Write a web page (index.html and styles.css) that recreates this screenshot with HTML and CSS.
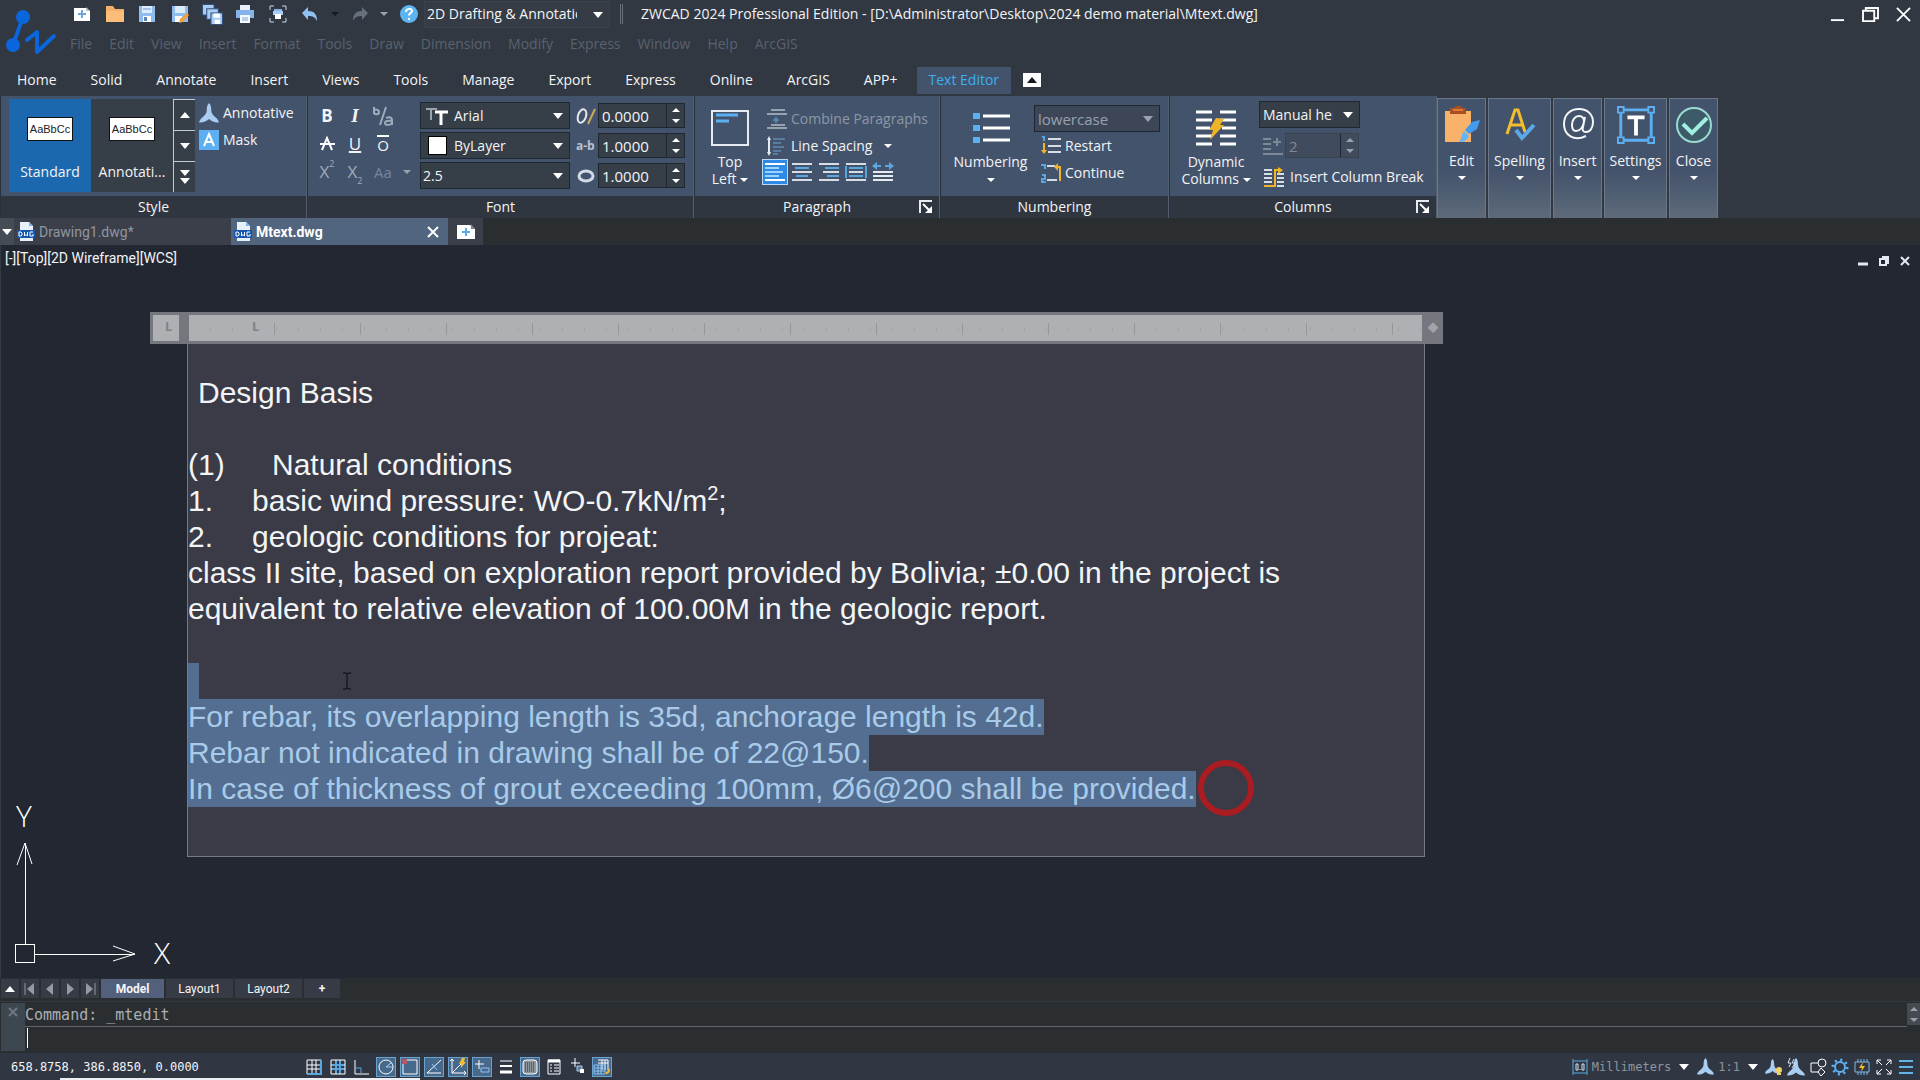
FILE: index.html
```
<!DOCTYPE html>
<html lang="en">
<head>
    <meta charset="UTF-8">
    <meta name="viewport" content="width=device-width, initial-scale=1.0">
    <title>ZWCAD 2024 Professional Edition</title>
    <link rel="stylesheet" href="styles.css">
</head>
<body>

    <!-- Shared icons -->
    <svg class="sprite" aria-hidden="true">
        <symbol id="i-scale" viewBox="0 0 18 18">
            <path d="M9 0c1.6 1.6 2 3.400 2 6.500 0 2.600 1.500 4.500 4 6.500 1.500 1.200 2.500 2.500 3 4.500-3.500.3-6.500-.6-9-3-2.500 2.400-5.500 3.300-9 3 .5-2 1.500-3.300 3-4.500 2.500-2 4-3.900 4-6.500C7 3.400 7.400 1.600 9 0z" fill="#a9cdf0"/>
        </symbol>
        <symbol id="i-dwg" viewBox="0 0 18 20">
            <path d="M3 0h9l4 4v15H3z" fill="#e8f0fa"/>
            <path d="M12 0v4h4z" fill="#7fb2ea"/>
            <rect y="8" width="18" height="8" fill="#1558b0"/>
            <path d="M2 10v4h2l1-1v-2l-1-1zM7.500 10v4l1.500-1.500 1.500 1.500v-4M16 10h-3v4h3v-2" fill="none" stroke="#fff"/>
        </symbol>
        <symbol id="i-launch" viewBox="0 0 14 14">
            <path d="M1 13V1h12" fill="none" stroke="#e8ebef" stroke-width="2"/>
            <path d="M4 4l7 7" stroke="#fff" stroke-width="2"/>
            <path d="M13 6v7H6z" fill="#fff"/>
        </symbol>
    </svg>

    <header class="top">
        <svg class="logo" viewBox="0 0 60 60" width="60" height="60" aria-hidden="true">
            <g fill="none" stroke="#0b66dd" stroke-width="4" stroke-linecap="round" stroke-linejoin="round">
                <path d="M23 13L13 41"/>
                <path d="M27 36l10-8v20l17-16"/>
            </g>
            <circle cx="23" cy="13" r="7" fill="#0b66dd"/>
            <circle cx="13" cy="41" r="7" fill="#0b66dd"/>
        </svg>
        <div class="top-rows">
            <div class="title-row">
                <div class="quick">
                    <button aria-label="New"><svg viewBox="0 0 18 18"><path d="M1 3h12l4 3v10H1z" fill="#fff"/><path d="M9 5v8M5 9h8" stroke="#6aa7df" stroke-width="2"/><path d="M13 2v4h4" fill="#b9c4d0"/></svg></button>
                    <button aria-label="Open"><svg viewBox="0 0 18 18"><path d="M0 1h7l2 3h9v13H0z" fill="#f3b06a"/><path d="M0 6h18v11H0z" fill="#fbbd78"/></svg></button>
                    <button aria-label="Save"><svg viewBox="0 0 18 18"><path d="M1 1h16v16H1z" fill="#8fbdf0"/><path d="M4 1h10v7H4z" fill="#dcecfb"/><path d="M5 11h8v6H5z" fill="#fff"/><path d="M6 12h3v4H6z" fill="#5a86b8"/><path d="M5 4h8" stroke="#6d9bd0"/></svg></button>
                    <button aria-label="Save as"><svg viewBox="0 0 18 18"><path d="M1 1h16v16H1z" fill="#8fbdf0"/><path d="M4 1h10v7H4z" fill="#dcecfb"/><path d="M4 11h7v6H4z" fill="#fff"/><path d="M16 8l2 2-6 7-4 1 1-4z" fill="#f0a040"/></svg></button>
                    <button aria-label="Save all"><svg class="larger" viewBox="0 0 20 20"><g stroke="#34507a" fill="#a9cdf5"><path d="M0.500 0.500h11v10h-11z"/><path d="M4.500 4.500h11v10h-11z"/><path d="M8.500 8.500h11v11h-11z"/></g><path d="M11 9h6v4h-6zM12 15h5v4h-5z" fill="#fff"/></svg></button>
                    <button aria-label="Plot"><svg viewBox="0 0 18 18"><path d="M4 0h10v5H4z" fill="#e8f2fd"/><path d="M0 5h18v8H0z" fill="#86b4ea"/><path d="M4 10h10v8H4z" fill="#f4f9ff"/><path d="M6 13h6M6 15h6" stroke="#7ea7d8"/></svg></button>
                    <button aria-label="Plot preview"><svg viewBox="0 0 18 18"><path d="M1 5V1h4M13 1h4v4M17 13v4h-4M5 17H1v-4" fill="none" stroke="#c8d6e6"/><path d="M5 4h8v3H5z" fill="#86b4ea"/><path d="M4 6h10v4H4z" fill="#a9cdf5"/><path d="M6 9h6v5H6z" fill="#fff"/></svg></button>
                    <button aria-label="Undo"><svg viewBox="0 0 18 18"><path d="M7 2v4c6 0 9 3 9 10-2-4-4-5-9-5v4L1 8z" fill="#8fc1f2"/></svg></button>
                    <button aria-label="Undo list"><i class="caret small dark"></i></button>
                    <button aria-label="Redo"><svg viewBox="0 0 18 18"><path d="M11 2v4c-6 0-9 3-9 10 2-4 4-5 9-5v4l6-7z" fill="#66717d"/></svg></button>
                    <button aria-label="Redo list"><i class="caret small grey"></i></button>
                    <button aria-label="Help"><svg viewBox="0 0 18 18"><circle cx="9" cy="9" r="9" fill="#5db4f3"/><path d="M6 7c0-4 6-4 6-1 0 2-3 2-3 4.500" fill="none" stroke="#fff" stroke-width="2"/><circle cx="9" cy="14" r="1.200" fill="#fff"/></svg></button>
                </div>
                <label class="combo workspace">
                    <select aria-label="Workspace"><option>2D Drafting &amp; Annotation</option></select>
                </label>
                <span class="bar"></span>
                <h1>ZWCAD 2024 Professional Edition - [D:\Administrator\Desktop\2024 demo material\Mtext.dwg]</h1>
                <div class="window-buttons">
                    <button aria-label="Minimize"><svg viewBox="0 0 16 16"><path d="M1 14h14" stroke="#fff" stroke-width="2"/></svg></button>
                    <button aria-label="Restore"><svg viewBox="0 0 18 16"><path d="M1 4h12v11H1zM4 4V1h13v11h-4" fill="none" stroke="#fff" stroke-width="2"/></svg></button>
                    <button aria-label="Close window"><svg viewBox="0 0 16 16"><path d="M1 1l14 14M15 1L1 15" stroke="#fff" stroke-width="2"/></svg></button>
                </div>
            </div>
            <nav class="menu">
                <a href="#">File</a><a href="#">Edit</a><a href="#">View</a><a href="#">Insert</a><a href="#">Format</a><a href="#">Tools</a><a href="#">Draw</a><a href="#">Dimension</a><a href="#">Modify</a><a href="#">Express</a><a href="#">Window</a><a href="#">Help</a><a href="#">ArcGIS</a>
            </nav>
        </div>
    </header>

    <nav class="ribbon-tabs">
        <button>Home</button><button>Solid</button><button>Annotate</button><button>Insert</button><button>Views</button><button>Tools</button><button>Manage</button><button>Export</button><button>Express</button><button>Online</button><button>ArcGIS</button><button>APP+</button><button class="active">Text Editor</button>
        <button class="collapse" aria-label="Collapse ribbon"><i class="caret up dark"></i></button>
    </nav>

    <div class="ribbon">
        <!-- Style -->
        <section class="panel style">
            <div class="panel-body">
                <div class="gallery">
                    <button class="card active"><span class="sample">AaBbCc</span>Standard</button>
                    <button class="card"><span class="sample">AaBbCc</span>Annotati...</button>
                    <div class="scroller">
                        <button aria-label="Previous styles"><i class="caret up"></i></button>
                        <button aria-label="Next styles"><i class="caret"></i></button>
                        <button aria-label="All styles"><i class="caret"></i><i class="caret"></i></button>
                    </div>
                </div>
                <div class="stack style-tools">
                    <button class="tool"><svg width="20" height="20"><use href="#i-scale"/></svg>Annotative</button>
                    <button class="tool"><svg width="20" height="20" viewBox="0 0 20 20"><path d="M0 0h20v20H0z" fill="#5cb0f2"/><path d="M5 16l5-12 5 12M7 12h6" fill="none" stroke="#fff" stroke-width="2"/></svg>Mask</button>
                </div>
            </div>
            <h2>Style</h2>
        </section>

        <!-- Font -->
        <section class="panel font">
            <div class="panel-body">
                <div class="format-grid">
                    <button class="bold">B</button>
                    <button class="italic">I</button>
                    <button class="soft" aria-label="Stack"><svg viewBox="0 0 22 20"><path d="M2 1v7M2 5c0-2 5-2 5 1s-5 3-5 0M8 19L14 1M14 12c4-2 6 0 6 2v5M20 15c-6-1-7 1-7 2 0 3 6 2 7 0" fill="none" stroke="#9fabbb" stroke-width="2"/></svg></button>
                    <button aria-label="Strikethrough"><svg viewBox="0 0 22 20"><path d="M6 16l5-12 5 12M4 10h15" fill="none" stroke="#fff" stroke-width="2"/></svg></button>
                    <button class="under">U</button>
                    <button class="over"><span>O</span></button>
                    <button class="soft">X<sup>2</sup></button>
                    <button class="soft">X<sub>2</sub></button>
                    <button class="case">Aa</button>
                    <i class="caret small grey"></i>
                </div>
                <div class="stack font-combos">
                    <label class="combo"><svg width="22" height="20" viewBox="0 0 22 20"><path d="M0 3h11M5 3v11" stroke="#9aa4b0" stroke-width="2"/><path d="M9 6h13M15 6v13" stroke="#fff" stroke-width="3"/></svg><select aria-label="Font name"><option>Arial</option></select></label>
                    <label class="combo"><span class="swatch"></span><select aria-label="Text color"><option>ByLayer</option></select></label>
                    <label class="combo flush"><select aria-label="Text height"><option>2.5</option></select></label>
                </div>
                <div class="stack spinners">
                    <label class="spin-row"><svg viewBox="0 0 20 18"><ellipse cx="6" cy="9" rx="4" ry="7" transform="rotate(18 6 9)" fill="none" stroke="#e4e8ee" stroke-width="2"/><path d="M12 17L19 2" stroke="#c9a95a" stroke-width="2"/></svg>
                        <span class="spin"><input type="text" value="0.0000" aria-label="Oblique angle"><span class="steps"><i class="caret up small"></i><i class="caret small"></i></span></span></label>
                    <label class="spin-row"><svg viewBox="0 0 20 18"><text x="0" y="13" class="ab">a-b</text></svg>
                        <span class="spin"><input type="text" value="1.0000" aria-label="Tracking"><span class="steps"><i class="caret up small"></i><i class="caret small"></i></span></span></label>
                    <label class="spin-row"><svg viewBox="0 0 20 18"><ellipse cx="10" cy="9" rx="7" ry="5" fill="none" stroke="#d3dae3" stroke-width="3"/></svg>
                        <span class="spin"><input type="text" value="1.0000" aria-label="Width factor"><span class="steps"><i class="caret up small"></i><i class="caret small"></i></span></span></label>
                </div>
            </div>
            <h2>Font</h2>
        </section>

        <!-- Paragraph -->
        <section class="panel paragraph">
            <div class="panel-body">
                <button class="big"><svg width="38" height="36" viewBox="0 0 38 36"><path d="M1 1h36v34H1z" fill="none" stroke="#e6ebf1" stroke-width="2"/><path d="M5 5h22M5 11h13" stroke="#5cb0f2" stroke-width="3"/></svg><span>Top<br>Left <i class="caret small"></i></span></button>
                <div class="stack paragraph-tools">
                    <button class="tool off"><svg width="20" height="20" viewBox="0 0 20 20"><path d="M4 1h14M0 5h20M4 16h14M0 19h20" stroke="#98a3b2" stroke-width="2"/><path d="M9 8v6M6 11h6" stroke="#5a86ad" stroke-width="2"/></svg>Combine Paragraphs</button>
                    <button class="tool"><svg width="20" height="20" viewBox="0 0 20 20"><path d="M2 2v16" stroke="#e6ebf1" stroke-width="2"/><path d="M2 0l2 4H0zM2 20l2-4H0z" fill="#e6ebf1"/><path d="M6 3h12M6 7h8M6 11h11M6 15h8M6 18h5" stroke="#6fa6d6"/></svg>Line Spacing <i class="caret small"></i></button>
                    <div class="aligns">
                        <button class="active" aria-label="Align left"><svg viewBox="0 0 22 20"><path d="M1 2h20M1 18h20" stroke="#fff" stroke-width="2"/><path d="M1 6h14M1 10h18M1 14h14" stroke="#9fd3ff" stroke-width="2"/></svg></button>
                        <button aria-label="Align center"><svg viewBox="0 0 22 20"><path d="M1 2h20M1 10h20M1 18h20" stroke="#d6dde6" stroke-width="2"/><path d="M4 6h14M5 14h12" stroke="#5aa7e0" stroke-width="2"/></svg></button>
                        <button aria-label="Align right"><svg viewBox="0 0 22 20"><path d="M1 2h20M5 10h16M1 18h20" stroke="#d6dde6" stroke-width="2"/><path d="M7 6h14M9 14h12" stroke="#5aa7e0" stroke-width="2"/></svg></button>
                        <button aria-label="Justify"><svg viewBox="0 0 22 20"><path d="M1 2h20M4 10h14M1 18h20" stroke="#d6dde6" stroke-width="2"/><path d="M4 6h14M4 14h14M1 4v12M21 4v12" stroke="#5aa7e0" stroke-width="2"/></svg></button>
                        <button aria-label="Distribute"><svg viewBox="0 0 22 20"><path d="M1 10h20M1 14h20M1 18h20" stroke="#e6ebf1" stroke-width="2"/><path d="M3 4h6M13 4h6" stroke="#5aa7e0" stroke-width="2"/><path d="M5 0v8L0 4zM17 0v8l5-4z" fill="#5aa7e0"/></svg></button>
                    </div>
                </div>
            </div>
            <h2>Paragraph<button class="launch" aria-label="Paragraph settings"><svg width="14" height="14"><use href="#i-launch"/></svg></button></h2>
        </section>

        <!-- Numbering -->
        <section class="panel numbering">
            <div class="panel-body">
                <button class="big"><svg width="38" height="36" viewBox="0 0 38 36"><path d="M11 6h27M11 18h27M11 30h27" stroke="#fff" stroke-width="3"/><path d="M1 3h7v6H1zM1 15h7v6H1zM1 27h7v6H1z" fill="#5cb0f2"/></svg><span>Numbering<br><i class="caret small"></i></span></button>
                <div class="stack numbering-tools">
                    <label class="combo off"><select aria-label="Numbering style" disabled><option>lowercase</option></select></label>
                    <button class="tool"><svg width="20" height="20" viewBox="0 0 20 20"><path d="M3 0v5M1 1l2-1" stroke="#5aa7e0" stroke-width="2"/><path d="M3 7v8" stroke="#f0b429" stroke-width="2"/><path d="M0 14h6l-3 4z" fill="#f0b429"/><path d="M7 3h13M7 10h13M7 16h13" stroke="#d6dde6" stroke-width="2"/></svg>Restart</button>
                    <button class="tool"><svg width="20" height="20" viewBox="0 0 20 20"><path d="M0 2h4v4M1 12h3v4H1v3h4" fill="none" stroke="#5aa7e0" stroke-width="2"/><path d="M6 3h8M6 17h10" stroke="#d6dde6" stroke-width="2"/><path d="M19 18V4h-4" fill="none" stroke="#f0b429" stroke-width="2"/><path d="M17 0v8l-4-4z" fill="#f0b429"/></svg>Continue</button>
                </div>
            </div>
            <h2>Numbering</h2>
        </section>

        <!-- Columns -->
        <section class="panel columns">
            <div class="panel-body">
                <button class="big"><svg width="40" height="36" viewBox="0 0 40 36"><path d="M0 2h16M0 10h16M0 18h14M0 26h16M0 34h16M24 2h16M24 10h16M26 18h14M24 26h16M24 34h16" stroke="#fff" stroke-width="3"/><path d="M20 8l8 1-4 6h4L14 30l3-10h-4z" fill="#f0b429"/></svg><span>Dynamic<br>Columns <i class="caret small"></i></span></button>
                <div class="stack columns-tools">
                    <label class="combo flow"><select aria-label="Column flow"><option>Manual height</option></select></label>
                    <label class="spin-row off"><svg viewBox="0 0 20 18"><path d="M0 2h8M0 7h8M0 12h8M0 17h20M14 1v8M10 5h8" stroke="#7e8998" stroke-width="2"/></svg>
                        <span class="spin"><input type="text" value="2" aria-label="Column count" disabled><span class="steps"><i class="caret up small grey"></i><i class="caret small grey"></i></span></span></label>
                    <button class="tool"><svg width="20" height="20" viewBox="0 0 20 20"><path d="M0 3h8M0 7h8M0 11h8M0 15h8M13 7h7M13 11h7M13 15h7M13 19h7" stroke="#d6dde6" stroke-width="2"/><path d="M0 19h11V3h4" fill="none" stroke="#f0b429" stroke-width="2"/><path d="M14 0l5 3-5 4z" fill="#f0b429"/></svg>Insert Column Break</button>
                </div>
            </div>
            <h2>Columns<button class="launch" aria-label="Column settings"><svg width="14" height="14"><use href="#i-launch"/></svg></button></h2>
        </section>

        <!-- Collapsed panels -->
        <div class="folded">
            <button><svg viewBox="0 0 38 38"><path d="M2 5h26v31H2z" fill="#f8b26a"/><path d="M7 2h4l2-2h4l2 2h4v6H7z" fill="#a8501f"/><path d="M10 4h10" stroke="#e07a3a" stroke-width="2"/><path d="M37 14l-3 9-8 5-4-4 7-8z" fill="#3f9cee"/><path d="M21 25l5 5c-2 5-6 6-10 6 3-3 2-8 5-11z" fill="#62b6fa"/></svg>Edit<i class="caret small"></i></button>
            <button class="wide"><svg viewBox="0 0 38 38"><path d="M6 28L14 4h3l7 22M10 19h11" fill="none" stroke="#f2bd2e" stroke-width="3"/><path d="M15 24l6 8 12-13" fill="none" stroke="#5ba8ea" stroke-width="4"/></svg>Spelling<i class="caret small"></i></button>
            <button><svg viewBox="0 0 38 38"><path d="M27 30c-12 6-22-1-22-12C5 8 12 3 20 3c9 0 14 6 14 13 0 6-3 10-7 10-3 0-4-2-3-5l2-10M25 16c0-4-2-6-5-6-4 0-7 4-7 9 0 4 2 6 4 6 4 0 7-4 8-9z" fill="none" stroke="#f4f6f8" stroke-width="2"/></svg>Insert<i class="caret small"></i></button>
            <button class="wide"><svg viewBox="0 0 40 40"><path d="M4 4h32v32H4z" fill="none" stroke="#5cb0f2" stroke-width="3"/><path d="M1 1h6v6H1zM33 1h6v6h-6zM1 33h6v6H1zM33 33h6v6h-6z" fill="#45536c" stroke="#5cb0f2" stroke-width="2"/><path d="M11 12h18M20 12v19" stroke="#fff" stroke-width="4"/></svg>Settings<i class="caret small"></i></button>
            <button><svg viewBox="0 0 38 38"><circle cx="19" cy="19" r="17" fill="#3d5a68" stroke="#9adbd0" stroke-width="2"/><path d="M8 18l9 9 15-15" fill="none" stroke="#9ff0e0" stroke-width="4"/></svg>Close<i class="caret small"></i></button>
        </div>
    </div>

    <div class="doc-tabs">
        <button class="doc-list" aria-label="Drawing list"><i class="caret"></i></button>
        <div class="doc"><svg width="18" height="20"><use href="#i-dwg"/></svg><a href="#">Drawing1.dwg*</a></div>
        <div class="doc active"><svg width="18" height="20"><use href="#i-dwg"/></svg><a href="#">Mtext.dwg</a><button class="doc-close" aria-label="Close drawing"><svg width="12" height="12" viewBox="0 0 12 12"><path d="M1 1l10 10M11 1L1 11" stroke="#fff" stroke-width="2"/></svg></button></div>
        <button class="doc-new" aria-label="New drawing"><svg width="18" height="16" viewBox="0 0 18 16"><path d="M0 1h13l5 4v10H0z" fill="#fff"/><path d="M14 0v5h4" fill="#7c8694"/><path d="M9 4v8M5 8h8" stroke="#5ba8ea" stroke-width="2"/></svg></button>
    </div>

    <main class="canvas">
        <div class="view-bar">
            <span>[-][Top][2D Wireframe][WCS]</span>
            <div class="view-buttons">
                <button aria-label="Minimize view"><svg viewBox="0 0 10 10"><path d="M0 8h10" stroke="#e6e9f2" stroke-width="3"/></svg></button>
                <button aria-label="Restore view"><svg viewBox="0 0 10 10"><path d="M1 3h6v6H1zM3 1h6v7" fill="none" stroke="#e6e9f2" stroke-width="2"/></svg></button>
                <button aria-label="Close view"><svg viewBox="0 0 10 10"><path d="M1 1l8 8M9 1L1 9" stroke="#e6e9f2" stroke-width="2"/></svg></button>
            </div>
        </div>

        <!-- In-place text editor, placed over the drawing -->
        <div class="mtext">
            <div class="ruler">
                <span class="tab-kind">L</span>
                <span class="indent"></span>
                <div class="scale"><span class="tab-stop">L</span></div>
                <span class="grip">◆</span>
            </div>
            <div class="mtext-box" contenteditable="true" spellcheck="false" role="textbox" aria-multiline="true" aria-label="Text">
                <p class="heading">Design Basis</p>
                <p><br></p>
                <p><span class="tab wide">(1)</span>Natural conditions</p>
                <p><span class="tab">1.</span>basic wind pressure: WO-0.7kN/m<sup>2</sup>;</p>
                <p><span class="tab">2.</span>geologic conditions for projeat:</p>
                <p>class II site, based on exploration report provided by Bolivia; ±0.00 in the project is</p>
                <p>equivalent to relative elevation of 100.00M in the geologic report.</p>
                <p><br></p>
                <p><span class="sel blank">&nbsp;</span></p>
                <p><span class="sel">For rebar, its overlapping length is 35d, anchorage length is 42d.</span></p>
                <p><span class="sel">Rebar not indicated in drawing shall be of 22@150.</span></p>
                <p><span class="sel">In case of thickness of grout exceeding 100mm, Ø6@200 shall be provided.</span></p>
            </div>
        </div>

        <svg class="ibeam" width="10" height="18" viewBox="0 0 10 18" aria-hidden="true"><path d="M1 1h3l1 1 1-1h3M5 2v14M1 17h3l1-1 1 1h3" fill="none" stroke="#08090c"/></svg>
        <span class="click-ring"></span>

        <svg class="ucs" width="180" height="200" viewBox="0 -15 180 200" aria-label="UCS icon">
            <g fill="none" stroke="#fff" shape-rendering="crispEdges">
                <path d="M15.500 144.500h19v18h-19z"/>
                <path d="M25 144V43M35 154h100"/>
            </g>
            <path d="M17 65l8-22 7 21M113 146l22 8-22 7" fill="none" stroke="#fff"/>
            <text x="16" y="27">Y</text>
            <text x="154" y="164">X</text>
        </svg>
    </main>

    <div class="layout-tabs">
        <button class="step" aria-label="Layout list"><i class="caret up"></i></button>
        <button class="step" aria-label="First"><svg viewBox="0 0 12 12"><path d="M1 0v12" stroke="#9299a2"/><path d="M10 0v12L3 6z" fill="#9299a2"/></svg></button>
        <button class="step" aria-label="Previous"><svg viewBox="0 0 12 12"><path d="M9 0v12L2 6z" fill="#9299a2"/></svg></button>
        <button class="step" aria-label="Next"><svg viewBox="0 0 12 12"><path d="M3 0v12l7-6z" fill="#9299a2"/></svg></button>
        <button class="step" aria-label="Last"><svg viewBox="0 0 12 12"><path d="M11 0v12" stroke="#9299a2"/><path d="M2 0v12l7-6z" fill="#9299a2"/></svg></button>
        <button class="layout active">Model</button>
        <button class="layout">Layout1</button>
        <button class="layout">Layout2</button>
        <button class="layout add">+</button>
    </div>

    <div class="command">
        <button class="command-close" aria-label="Close command line"><svg width="10" height="10" viewBox="0 0 10 10"><path d="M1 1l8 8M9 1L1 9" stroke="#6d7780" stroke-width="2"/></svg></button>
        <div class="command-lines">
            <p>Command: _mtedit</p>
            <div class="prompt"><span class="cursor"></span><input type="text" aria-label="Command line"></div>
        </div>
        <div class="command-scroll"><i class="caret up small grey"></i><i class="caret small grey"></i></div>
    </div>

    <footer class="status">
        <span class="coords">658.8758, 386.8850, 0.0000</span>
        <div class="toggles">
            <button aria-label="Snap"><svg viewBox="0 0 20 20"><path d="M3 3h14v14H3zM3 8h14M3 12h14M8 3v14M12 3v14" fill="none" stroke="#fff"/><path d="M17 3v14H3" fill="none" stroke="#5aa7e0" stroke-width="2"/></svg></button>
            <button aria-label="Grid"><svg viewBox="0 0 20 20"><path d="M3 8h14M3 12h14M8 3v14M12 3v14" stroke="#5aa7e0" stroke-width="2"/><path d="M3 3h14v14H3z" fill="none" stroke="#fff"/></svg></button>
            <button aria-label="Ortho"><svg viewBox="0 0 20 20"><path d="M3 3v14h14" fill="none" stroke="#fff"/><path d="M3 11h6v6" fill="none" stroke="#5aa7e0"/></svg></button>
            <button class="on" aria-label="Polar"><svg viewBox="0 0 20 20"><circle cx="10" cy="10" r="7" fill="none" stroke="#fff"/><path d="M17 10h-7l5-4" fill="none" stroke="#a9cdf0"/></svg></button>
            <button class="on" aria-label="Object snap"><svg viewBox="0 0 20 20"><path d="M7 3h10v14H3V7" fill="none" stroke="#fff"/><path d="M2 2h5v5H2z" fill="#b0596a"/></svg></button>
            <button class="on" aria-label="Snap tracking"><svg viewBox="0 0 20 20"><path d="M17 3L3 16h14" fill="none" stroke="#fff"/><path d="M8 7l5 6" stroke="#8ec4f5"/></svg></button>
            <button class="on" aria-label="Dynamic UCS"><svg viewBox="0 0 20 20"><path d="M4 2v14h14M4 16l9-9M2 4l2-2 2 2M16 14l2 2-2 2" fill="none" stroke="#fff"/><path d="M14 1h3l-1 4h2l-5 6v-4h-2z" fill="#f2bd2e"/></svg></button>
            <button class="on" aria-label="Dynamic input"><svg viewBox="0 0 20 20"><path d="M7 3v9M3 7h9" stroke="#fff"/><path d="M9 11h8v4H9z" fill="none" stroke="#8ec4f5"/></svg></button>
            <button aria-label="Lineweight"><svg viewBox="0 0 20 20"><path d="M4 4h12" stroke="#fff"/><path d="M4 9h12" stroke="#fff" stroke-width="2"/><path d="M4 15h12" stroke="#fff" stroke-width="3"/></svg></button>
            <button class="on" aria-label="Transparency"><svg viewBox="0 0 20 20"><rect x="3" y="3" width="14" height="14" rx="3" fill="#8c949c" stroke="#fff"/><path d="M5 6h10M5 8h10M5 10h10M5 12h10M5 14h10" stroke="#2c3238" stroke-dasharray="1 1"/></svg></button>
            <button aria-label="Quick properties"><svg viewBox="0 0 20 20"><path d="M4 3h12v14H4z" fill="none" stroke="#fff"/><path d="M4 4h12" stroke="#fff" stroke-width="3"/><path d="M6 8h2M6 11h2M6 14h2M10 8h5M10 11h5M10 14h5" stroke="#fff"/></svg></button>
            <button aria-label="Selection cycling"><svg viewBox="0 0 20 20"><path d="M7 1v9M3 6h9" stroke="#fff"/><path d="M9 9h5v5H9z" fill="#5b7896" stroke="#a9cdf0"/><path d="M12 12h4v4h-4z" fill="#fff"/></svg></button>
            <button class="on" aria-label="Model space"><svg viewBox="0 0 20 20"><path d="M6 3h10v10M6 6h10M10 3v10M13 3v10" fill="none" stroke="#fff"/><path d="M2 8h11v9H2zM2 11h11M2 14h11M6 8v9M9 8v9" fill="none" stroke="#8ec4f5"/><path d="M14 16c3 0 3-2 3-4" fill="none" stroke="#f2bd2e" stroke-width="2"/></svg></button>
        </div>
        <div class="units">
            <svg width="16" height="16" viewBox="0 0 16 16"><path d="M1 0v16M15 0v16M1 2h14M1 14h14" stroke="#5aa7e0"/><path d="M4 5h2v6H4zM10 5h2v6h-2zM8 10v1" fill="none" stroke="#cfe3f7"/></svg>
            <button>Millimeters <i class="caret"></i></button>
            <svg width="17" height="17"><use href="#i-scale"/></svg>
            <button>1:1 <i class="caret"></i></button>
        </div>
        <div class="tray">
            <button aria-label="Annotation visibility"><svg viewBox="0 0 18 18"><use href="#i-scale" width="15" height="17"/><circle cx="14" cy="12" r="3" fill="#f6cf6a"/><path d="M12 16h4" stroke="#f6cf6a" stroke-width="2"/></svg></button>
            <button aria-label="Auto scale"><svg viewBox="0 0 18 18"><use href="#i-scale" width="18" height="18"/><path d="M3 0L1 5h3L2 9M7 1L5 5h3L5 10" fill="none" stroke="#d5e6f7"/></svg></button>
            <button aria-label="Isolate objects"><svg viewBox="0 0 18 18"><path d="M9 5H2v9h8" fill="none" stroke="#fff"/><circle cx="13" cy="5" r="4" fill="none" stroke="#fff"/><path d="M12 10l4 4-4 4-3-4z" fill="none" stroke="#fff"/></svg></button>
            <button aria-label="Settings"><svg viewBox="0 0 18 18"><circle cx="9" cy="9" r="5" fill="none" stroke="#5cb0f2" stroke-width="2"/><circle cx="9" cy="9" r="7" fill="none" stroke="#5cb0f2" stroke-width="3" stroke-dasharray="2 3.500"/></svg></button>
            <button aria-label="Hardware acceleration"><svg viewBox="0 0 18 18"><path d="M2 4h14v10H2zM5 1v3M8 1v3M11 1v3M14 1v3M5 14v3M8 14v3M11 14v3M14 14v3" fill="none" stroke="#7cb8ea"/><path d="M10 4l-4 6h3l-1 4 4-6H9z" fill="#f2bd2e"/></svg></button>
            <button aria-label="Full screen"><svg viewBox="0 0 18 18"><path d="M2 6V2h4M12 2h4v4M16 12v4h-4M6 16H2v-4M2 2l5 5M16 2l-5 5M16 16l-5-5M2 16l5-5" fill="none" stroke="#fff"/></svg></button>
            <button aria-label="Customize"><svg viewBox="0 0 18 18"><path d="M2 3h14M2 9h14M2 15h14" stroke="#63b5e6" stroke-width="2"/></svg></button>
        </div>
        <span class="strip"></span>
    </footer>

</body>
</html>
```
FILE: styles.css
```
* {
    box-sizing: border-box;
}

body {
    margin: 0;
    height: 100vh;
    display: flex;
    flex-direction: column;
    overflow: hidden;
    background: #313842;
    color: #f2f4f6;
    font-family: 'Open Sans', 'Noto Sans', sans-serif;
    font-size: 14px;
    line-height: 18px;
}

button, select, input {
    font: inherit;
    color: inherit;
    background: none;
    border: 0;
    padding: 0;
    margin: 0;
}

button {
    display: flex;
    align-items: center;
    justify-content: center;
    white-space: nowrap;
}

a {
    color: inherit;
    text-decoration: none;
}

h1, h2, p {
    margin: 0;
    font-size: inherit;
    font-weight: normal;
}

svg {
    flex: none;
    display: block;
}

.sprite {
    position: absolute;
    width: 0;
    height: 0;
}

/* Triangles */
.caret {
    flex: none;
    display: inline-block;
    border: 5px solid transparent;
    border-top: 6px solid #fff;
    border-bottom: 0;
}

.caret.up {
    border-top: 0;
    border-bottom: 6px solid #fff;
}

.caret.small {
    border-width: 4px 4px 0;
    vertical-align: middle;
}

.caret.up.small {
    border-width: 0 4px 4px;
}

.caret.dark {
    border-top-color: #15181c;
    border-bottom-color: #15181c;
}

.caret.grey {
    border-top-color: #98a1ad;
    border-bottom-color: #98a1ad;
}

/* Title and menu */
.top {
    display: flex;
    height: 64px;
}

.logo {
    margin-top: 4px;
}

.top-rows {
    flex: 1;
}

.title-row {
    display: flex;
    align-items: center;
    height: 28px;
}

.quick {
    display: flex;
    justify-content: space-between;
    width: 364px;
    padding: 0 14px 0 13px;
}

.quick button {
    width: 18px;
    height: 20px;
}

.quick button:nth-child(n+8) {
    margin-right: -8px;
}

.quick svg {
    width: 18px;
    height: 18px;
}

.quick .larger {
    width: 21px;
    height: 21px;
}

.combo {
    display: flex;
    align-items: center;
    position: relative;
    height: 27px;
    background: #363e48;
    border: 1px solid #1f2732;
}

.combo select {
    flex: 1;
    min-width: 0;
    height: 100%;
    padding: 0 28px 0 6px;
    appearance: none;
    text-overflow: clip;
    opacity: 1;
}

.combo::after {
    content: '';
    position: absolute;
    right: 6px;
    top: 10px;
    border: 5px solid transparent;
    border-top: 6px solid #fff;
    border-bottom: 0;
    pointer-events: none;
}

.combo.flush select {
    padding-left: 2px;
}

.workspace {
    width: 186px;
    background: #353c46;
    border-color: #3b424c;
}

.workspace select {
    padding: 0 32px 0 2px;
}

.bar {
    width: 3px;
    height: 20px;
    margin: 0 18px 0 10px;
    border: 1px solid #6a717b;
    border-width: 0 1px;
}

.window-buttons {
    display: flex;
    gap: 16px;
    margin-left: auto;
    padding-right: 8px;
}

.window-buttons svg {
    width: 17px;
    height: 15px;
}

.menu {
    display: flex;
    gap: 17px;
    padding: 7px 0 0 10px;
    color: #59626d;
}

/* Ribbon tabs */
.ribbon-tabs {
    display: flex;
    align-items: center;
    height: 32px;
}

.ribbon-tabs button {
    height: 27px;
    padding: 0 17px;
}

.ribbon-tabs .active {
    margin-left: 2px;
    padding: 0 12px;
    background: #44536c;
    color: #3fb0ee;
}

.ribbon-tabs .collapse {
    width: 18px;
    height: 14px;
    margin-left: 12px;
    padding: 0;
    background: #fff;
}

/* Ribbon */
.ribbon {
    display: flex;
    height: 122px;
}

.panel {
    display: flex;
    flex-direction: column;
    border-left: 1px solid #29313c;
    border-right: 1px solid #54606f;
}

.panel-body {
    flex: 1;
    display: flex;
    padding: 4px 8px 0;
    background: #44536c;
}

.panel h2 {
    display: flex;
    align-items: center;
    justify-content: center;
    position: relative;
    height: 22px;
    background: #2f3640;
}

.launch {
    position: absolute;
    right: 6px;
    top: 4px;
}

.style {
    width: 307px;
}

.font {
    width: 387px;
}

.paragraph {
    width: 246px;
}

.numbering {
    width: 229px;
}

.columns {
    width: 268px;
}

.stack {
    display: flex;
    flex-direction: column;
    align-items: flex-start;
}

.tool {
    gap: 4px;
    height: 27px;
}

.tool.off {
    color: #8c97a8;
}

.gallery {
    display: flex;
    height: 93px;
    background: #363e48;
}

.card {
    flex-direction: column;
    justify-content: flex-start;
    width: 82px;
    padding-top: 18px;
    gap: 22px;
}

.card.active {
    background: #1c68ae;
}

.sample {
    width: 46px;
    padding: 2px 0;
    background: #fff;
    border: 1px solid #111;
    color: #222;
    font-family: 'Liberation Sans', sans-serif;
    font-size: 11px;
}

.scroller {
    display: flex;
    flex-direction: column;
    width: 22px;
    border-left: 1px solid #c4cad1;
}

.scroller button {
    flex: 1;
    flex-direction: column;
    gap: 2px;
    border-top: 1px solid #c4cad1;
}

.style .panel-body {
    padding-top: 3px;
}

.style-tools {
    padding-left: 4px;
}

/* Font panel */
.format-grid {
    display: grid;
    grid-template-columns: 28px 28px 28px 20px;
    grid-auto-rows: 28px;
    align-items: center;
    justify-items: center;
    width: 107px;
}

.format-grid button {
    width: 28px;
    height: 26px;
    font-size: 17px;
}

.format-grid svg {
    width: 22px;
    height: 20px;
}

.format-grid button:nth-child(3n+1) {
    grid-column: 1;
}

.format-grid .bold {
    font-weight: bold;
}

.format-grid .italic {
    font-family: 'Liberation Serif', serif;
    font-style: italic;
    font-weight: bold;
    font-size: 19px;
}

.format-grid .under {
    text-decoration: underline 2px;
}

.format-grid .over span {
    height: 18px;
    border-top: 2px solid #fff;
    font-size: 15px;
    line-height: 17px;
}

.format-grid .soft {
    color: #9fabbb;
}

.format-grid .case {
    color: #72869d;
    font-size: 15px;
}

.format-grid sup, .format-grid sub {
    font-size: 9px;
    line-height: 9px;
}

.format-grid sup {
    align-self: flex-start;
}

.format-grid sub {
    align-self: flex-end;
}

.format-grid > .caret {
    grid-column: 4;
    grid-row: 3;
}

.font .panel-body {
    padding: 6px 8px 0 5px;
}

.font-combos {
    gap: 3px;
    width: 150px;
}

.font-combos .combo {
    width: 100%;
    padding-left: 5px;
}

.font-combos .flush {
    padding-left: 0;
}

.swatch {
    width: 19px;
    height: 19px;
    margin: 0 1px 0 2px;
    background: #fff;
    border: 1px solid #000;
}

.spinners {
    gap: 3px;
    padding-left: 6px;
}

.spin-row {
    display: flex;
    align-items: center;
    gap: 2px;
    height: 27px;
}

.spin-row > svg {
    width: 20px;
    height: 18px;
}

.ab {
    fill: #b9c3cf;
    font-size: 12px;
    font-weight: bold;
}

.spin {
    display: flex;
    width: 87px;
    height: 25px;
    background: #363e48;
    border: 1px solid #1f2732;
}

.spin input {
    flex: 1;
    min-width: 0;
    padding-left: 3px;
    font-size: 15px;
}

.steps {
    display: flex;
    flex-direction: column;
    align-items: center;
    justify-content: space-around;
    width: 18px;
    border-left: 1px solid #1f2732;
}

/* Paragraph, Numbering, Columns */
.big {
    flex-direction: column;
    justify-content: flex-start;
    gap: 7px;
    padding-top: 10px;
    line-height: 17px;
}

.paragraph .big {
    width: 54px;
}

.paragraph-tools {
    padding: 5px 0 0 10px;
}

.paragraph .tool .caret {
    margin-left: 8px;
}

.aligns {
    display: flex;
    gap: 1px;
    margin-left: -5px;
}

.aligns button {
    width: 26px;
    height: 26px;
}

.aligns .active {
    background: #2b8be6;
    border: 1px solid #b7d9f8;
}

.aligns svg {
    width: 22px;
    height: 20px;
}

.numbering .big {
    width: 84px;
}

.numbering-tools {
    padding: 5px 0 0 2px;
}

.numbering-tools .combo {
    width: 126px;
}

.numbering-tools .tool {
    padding-left: 7px;
}

.combo.off {
    background: #3d4657;
    color: #98a1b0;
    font-size: 15px;
}

.combo.off select {
    padding-left: 3px;
}

.combo.off::after {
    border-top-color: #98a1b0;
}

.columns .big {
    width: 76px;
}

.columns-tools {
    gap: 4px;
    padding: 1px 0 0 5px;
}

.columns-tools .flow {
    width: 101px;
}

.flow select {
    padding: 0 26px 0 3px;
}

.spin-row.off {
    padding-left: 4px;
    color: #7e8998;
}

.off .spin {
    width: 74px;
    background: #404c5e;
    border-color: #38434f;
}

.columns-tools .tool {
    gap: 6px;
    padding-left: 5px;
}

/* Collapsed panels */
.folded {
    display: flex;
    gap: 2px;
    padding-top: 2px;
}

.folded button {
    flex-direction: column;
    justify-content: flex-start;
    width: 49px;
    padding-top: 7px;
    background: linear-gradient(#44536c 60%, #5d6a79);
    border: 1px solid #6b7889;
    border-bottom: 0;
}

.folded .wide {
    width: 63px;
}

.folded svg {
    width: 38px;
    height: 38px;
    margin-bottom: 8px;
}

.folded .caret {
    margin-top: 6px;
}

/* Drawing tabs */
.doc-tabs {
    display: flex;
    height: 27px;
    background: #2b2e31;
    font-family: Roboto, 'Liberation Sans', sans-serif;
}

.doc-list {
    width: 14px;
    background: #464c53;
}

.doc {
    display: flex;
    align-items: center;
    gap: 4px;
    width: 217px;
    padding: 0 9px 0 3px;
    background: #3b3f49;
    color: #9096a0;
}

.doc.active {
    background: #52657f;
    color: #fff;
    font-weight: bold;
}

.doc-close {
    margin-left: auto;
}

.doc-new {
    width: 35px;
    background: #3b3f49;
}

/* Drawing area */
.canvas {
    flex: 1;
    position: relative;
    background: #232731;
    border-left: 1px solid #343a44;
}

.view-bar {
    display: flex;
    justify-content: space-between;
    padding: 4px 10px 0 4px;
    font-family: Roboto, 'Liberation Sans', sans-serif;
}

.view-buttons {
    display: flex;
    gap: 11px;
    padding-top: 6px;
}

.view-buttons svg {
    width: 10px;
    height: 10px;
}

.mtext {
    position: absolute;
    left: 149px;
    top: 67px;
    width: 1293px;
}

.ruler {
    display: flex;
    height: 32px;
    padding: 3px 0;
    background: #74777d;
    color: #808286;
    font-weight: bold;
    font-size: 13px;
    line-height: 22px;
}

.tab-kind {
    width: 26px;
    margin-left: 3px;
    padding-left: 12px;
    background: #afb0b3;
}

.indent {
    width: 10px;
    background: #74777d;
    border-radius: 0 5px 5px 0;
}

.scale {
    flex: 1;
    padding-left: 63px;
    background:
        repeating-linear-gradient(90deg, transparent 0 85px, #95979b 85px 86px) 0 8px / 100% 12px no-repeat,
        repeating-linear-gradient(90deg, transparent 0 21px, #a0a2a5 21px 22px) 0 12px / 100% 4px no-repeat,
        #afb0b3;
}

.grip {
    width: 21px;
    text-align: center;
    color: #a2a4a8;
}

.mtext-box {
    height: 513px;
    margin: 0 18px 0 37px;
    padding-top: 31px;
    background: #3a3b46;
    border: 1px solid #777a83;
    border-top: 0;
    font-family: 'Liberation Sans', Arial, sans-serif;
    font-size: 30px;
    line-height: 36px;
    white-space: nowrap;
}

.mtext-box p {
    height: 36px;
}

.heading {
    padding-left: 10px;
}

.tab {
    display: inline-block;
    width: 64px;
}

.tab.wide {
    width: 84px;
}

.mtext-box sup {
    font-size: 20px;
    line-height: 0;
}

.sel {
    display: inline-block;
    height: 36px;
    vertical-align: top;
    background: #536e90;
    color: #a9cbea;
}

.sel.blank {
    width: 11px;
}

.ibeam {
    position: absolute;
    left: 341px;
    top: 427px;
}

.click-ring {
    position: absolute;
    left: 1197px;
    top: 515px;
    width: 56px;
    height: 56px;
    border: 6px solid #a81c22;
    border-radius: 50%;
}

.ucs {
    position: absolute;
    left: -1px;
    bottom: -7px;
    fill: #fff;
    font-size: 30px;
    font-weight: 300;
    pointer-events: none;
}

/* Layout tabs */
.layout-tabs {
    display: flex;
    position: relative;
    gap: 2px;
    height: 24px;
    padding: 1px 0 3px 1px;
    background: #2b2e31;
    border-bottom: 1px solid #343941;
    font-family: Roboto, 'Liberation Sans', sans-serif;
    font-size: 12px;
}

.step {
    width: 18px;
    background: #363b45;
}

.step svg {
    width: 12px;
    height: 12px;
}

.layout {
    min-width: 67px;
    background: #363b45;
}

.layout.active {
    min-width: 63px;
    background: #52607c;
    font-weight: bold;
}

.layout.add {
    min-width: 36px;
    font-weight: bold;
}

/* Command line */
.command {
    display: flex;
    height: 51px;
    padding: 1px 0 2px 1px;
    background: #2b2e30;
    color: #abafb4;
    font-family: 'DejaVu Sans Mono', monospace;
    font-size: 15px;
}

.command-close {
    align-items: flex-start;
    width: 24px;
    padding-top: 4px;
    background: #3d4750;
}

.command-lines {
    flex: 1;
    display: flex;
    flex-direction: column;
}

.command-lines p {
    height: 24px;
    padding-top: 3px;
    border-bottom: 1px solid #62666a;
}

.prompt {
    flex: 1;
    display: flex;
    padding: 1px 2px 3px;
}

.prompt input {
    flex: 1;
}

.cursor {
    width: 1px;
    background: #fff;
}

.command-scroll {
    display: flex;
    flex-direction: column;
    align-items: center;
    justify-content: space-around;
    width: 13px;
    height: 22px;
    background: #454a50;
}

/* Status bar */
.status {
    display: flex;
    align-items: center;
    position: relative;
    height: 27px;
    background: #303743;
    font-family: 'DejaVu Sans Mono', monospace;
    font-size: 12px;
}

.coords {
    width: 304px;
    padding-left: 11px;
}

.toggles {
    display: flex;
    gap: 4px;
}

.toggles button {
    width: 20px;
    height: 20px;
}

.toggles .on {
    background: #46698c;
    outline: 1px solid #68a2cf;
    outline-offset: -1px;
}

.toggles svg {
    width: 20px;
    height: 20px;
}

.units {
    display: flex;
    align-items: center;
    gap: 4px;
    margin-left: auto;
    color: #8d949e;
}

.units button {
    gap: 8px;
    padding-right: 4px;
}

.tray {
    display: flex;
    gap: 4px;
    padding: 0 5px 0 3px;
}

.tray svg {
    width: 18px;
    height: 18px;
}

.strip {
    position: absolute;
    left: 60px;
    bottom: 0;
    width: 360px;
    height: 2px;
    background: #eceff4;
}
```
